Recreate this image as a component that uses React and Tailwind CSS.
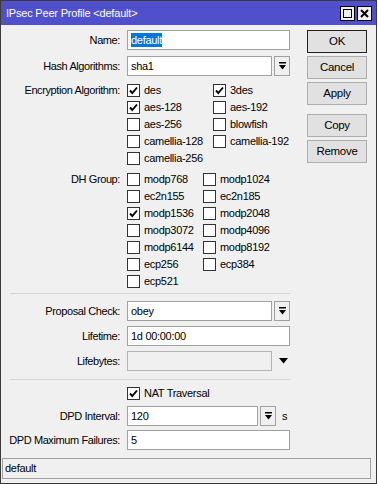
import React from "react";

const font = "font-['Liberation_Sans',Arial,sans-serif]";

function DropGlyph() {
  return (
    <svg width="7" height="8" viewBox="0 0 7 8">
      <rect x="0" y="0" width="7" height="1.5" fill="#000" />
      <polygon points="0,3 7,3 3.5,7.5" fill="#000" />
    </svg>
  );
}

function DropBtn() {
  return (
    <div className="ml-[2px] w-[16px] h-[20px] border border-[#a0a0a0] bg-[#f0f0f0] flex items-center justify-center">
      <DropGlyph />
    </div>
  );
}

function Input({ value, w = "w-[163px]", selected, disabled }) {
  return (
    <div
      className={`${w} h-[20px] border ${disabled ? "border-[#b4b4b4] bg-[#f0f0f0]" : "border-[#a0a0a0] bg-white"} flex items-center px-[3px] text-[11px] tracking-[-0.3px] text-black`}
    >
      {selected ? <span className="bg-[#0078d7] text-white leading-[14px]">{value}</span> : value}
    </div>
  );
}

function Label({ children }) {
  return (
    <div className="w-[120px] shrink-0 text-right text-[11px] tracking-[-0.4px] text-black pr-[1px]">
      {children}
    </div>
  );
}

function Row({ label, children, className = "" }) {
  return (
    <div className={`flex items-center h-[20px] gap-[6px] ${className}`}>
      <Label>{label}</Label>
      <div className="flex items-center">{children}</div>
    </div>
  );
}

function Check({ checked, label, w }) {
  return (
    <div className={`flex items-center h-[17px] ${w}`}>
      <div className="w-[13px] h-[13px] border border-[#333] bg-white flex items-center justify-center shrink-0">
        {checked && (
          <svg width="11" height="11" viewBox="0 0 11 11">
            <polyline points="2,5.5 4.3,8 9,2.5" fill="none" stroke="#000" strokeWidth="1.9" />
          </svg>
        )}
      </div>
      <span className="ml-[4px] text-[11px] tracking-[-0.3px] text-black whitespace-nowrap">{label}</span>
    </div>
  );
}

function Btn({ children, primary, className = "" }) {
  return (
    <div
      className={`h-[23px] w-[60px] border ${primary ? "border-[#222]" : "border-[#adadad]"} bg-[#e1e1e1] flex items-center justify-center text-[11.5px] tracking-[-0.3px] text-black ${className}`}
    >
      {children}
    </div>
  );
}

export default function App() {
  const enc = [
    ["des", true, "3des", true],
    ["aes-128", true, "aes-192", false],
    ["aes-256", false, "blowfish", false],
    ["camellia-128", false, "camellia-192", false],
    ["camellia-256", false],
  ];
  const dh = [
    ["modp768", false, "modp1024", false],
    ["ec2n155", false, "ec2n185", false],
    ["modp1536", true, "modp2048", false],
    ["modp3072", false, "modp4096", false],
    ["modp6144", false, "modp8192", false],
    ["ecp256", false, "ecp384", false],
    ["ecp521", false],
  ];

  return (
    <div className={`w-[378px] h-[484px] bg-white ${font}`}>
      <div className="w-[377px] h-[484px] border border-[#3a3a3a] bg-[#f0f0f0] flex flex-col">
        {/* title bar */}
        <div className="h-[24px] bg-[#5050cc] flex items-center pl-[5px] pr-[4px]">
          <span className="text-white text-[11px] tracking-[-0.2px]">IPsec Peer Profile &lt;default&gt;</span>
          <div className="ml-auto flex gap-[2px]">
            <div className="w-[15px] h-[15px] border border-black bg-[#f0f0f0] flex items-center justify-center">
              <div className="w-[9px] h-[9px] border-[1.5px] border-black" />
            </div>
            <div className="w-[15px] h-[15px] border border-black bg-[#f0f0f0] flex items-center justify-center">
              <svg width="9" height="9" viewBox="0 0 9 9">
                <path d="M1 1 L8 8 M8 1 L1 8" stroke="#000" strokeWidth="2" />
              </svg>
            </div>
          </div>
        </div>

        <div className="flex pt-[5px]">
          {/* form */}
          <div className="w-[290px] flex flex-col">
            <Row label="Name:">
              <Input value="default" selected />
            </Row>
            <Row label="Hash Algorithms:" className="mt-[6px]">
              <Input value="sha1" w="w-[145px]" />
              <DropBtn />
            </Row>

            <div className="flex gap-[6px] mt-[6px]">
              <div className="h-[17px] flex items-center">
                <Label>Encryption Algorithm:</Label>
              </div>
              <div className="flex flex-col">
                {enc.map((r) => (
                  <div key={r[0]} className="flex">
                    <Check label={r[0]} checked={r[1]} w="w-[86px]" />
                    {r[2] && <Check label={r[2]} checked={r[3]} />}
                  </div>
                ))}
              </div>
            </div>

            <div className="flex gap-[6px] mt-[4px]">
              <div className="h-[17px] flex items-center">
                <Label>DH Group:</Label>
              </div>
              <div className="flex flex-col">
                {dh.map((r) => (
                  <div key={r[0]} className="flex">
                    <Check label={r[0]} checked={r[1]} w="w-[76px]" />
                    {r[2] && <Check label={r[2]} checked={r[3]} />}
                  </div>
                ))}
              </div>
            </div>

            <div className="mt-[3px] ml-[9px] h-px bg-[#d5d5d5]" />

            <Row label="Proposal Check:" className="mt-[7px]">
              <Input value="obey" w="w-[145px]" />
              <DropBtn />
            </Row>
            <Row label="Lifetime:" className="mt-[5px]">
              <Input value="1d 00:00:00" />
            </Row>
            <Row label="Lifebytes:" className="mt-[5px]">
              <Input value="" w="w-[145px]" disabled />
              <svg className="ml-[7px]" width="9" height="6" viewBox="0 0 9 6">
                <polygon points="0,0 9,0 4.5,5.5" fill="#000" />
              </svg>
            </Row>

            <div className="mt-[8px] ml-[9px] h-px bg-[#d5d5d5]" />

            <div className="flex gap-[6px] mt-[5px]">
              <div className="w-[120px]" />
              <Check label="NAT Traversal" checked />
            </div>

            <Row label="DPD Interval:" className="mt-[4px]">
              <Input value="120" w="w-[131px]" />
              <DropBtn />
              <span className="ml-[6px] text-[11px] text-black">s</span>
            </Row>
            <Row label="DPD Maximum Failures:" className="mt-[4px]">
              <Input value="5" />
            </Row>
          </div>

          {/* buttons */}
          <div className="ml-[16px] flex flex-col">
            <Btn primary>OK</Btn>
            <Btn className="mt-[3px]">Cancel</Btn>
            <Btn className="mt-[3px]">Apply</Btn>
            <Btn className="mt-[9px]">Copy</Btn>
            <Btn className="mt-[3px]">Remove</Btn>
          </div>
        </div>

        {/* status bar */}
        <div className="mt-[8px] ml-[1px] w-[369px] h-[21px] border border-[#a0a0a0] flex items-center px-[2px] text-[11px] tracking-[-0.3px] text-black">
          default
        </div>
      </div>
    </div>
  );
}
